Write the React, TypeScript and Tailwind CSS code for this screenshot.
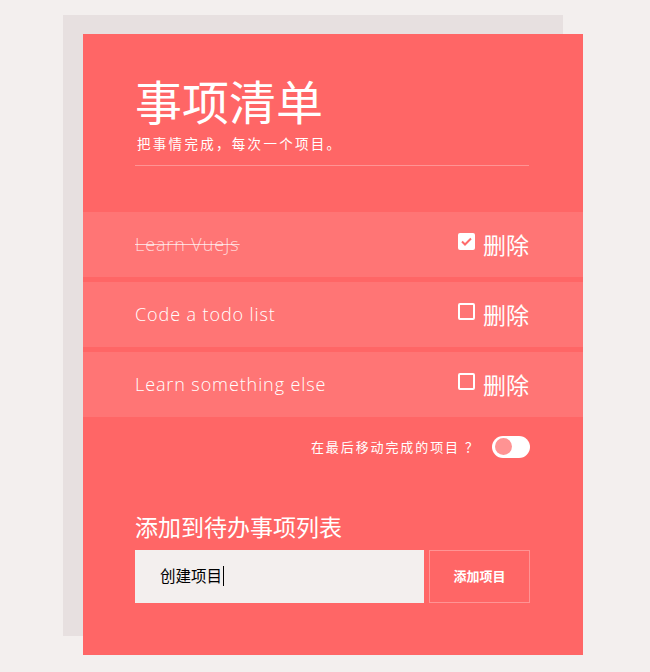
import { useState } from 'react';

interface Todo {
  id: number;
  text: string;
  done: boolean;
}

const LATIN = "font-['Open_Sans','Noto_Sans_CJK_SC',sans-serif]";
const CJK = "font-['Noto_Sans_CJK_SC',sans-serif]";

function CheckBox({ checked }: { checked: boolean }) {
  if (checked) {
    return (
      <span className="w-[17px] h-[17px] mb-[6px] bg-white rounded-[2px] flex items-center justify-center">
        <svg width="11" height="9" viewBox="0 0 11 9">
          <path d="M1 4.5 L4 7.5 L10 1.5" fill="none" stroke="#ff6b6b" strokeWidth="2" />
        </svg>
      </span>
    );
  }
  return <span className="w-[17px] h-[17px] mb-[6px] border-2 border-white rounded-[2px] block" />;
}

export default function App() {
  const [todos] = useState<Todo[]>([
    { id: 1, text: 'Learn VueJs', done: true },
    { id: 2, text: 'Code a todo list', done: false },
    { id: 3, text: 'Learn something else', done: false },
  ]);

  return (
    <div className={`min-h-[672px] bg-[#f3efee] pt-[34px] pl-[83px] ${CJK}`}>
      <div className="w-[500px] h-[621px] bg-[#ff6666] shadow-[-20px_-19px_0_0_#e7e0e0] text-white pt-[40px]">
        {/* Header */}
        <div className="px-[52px]">
          <h1 className="text-[47px] leading-[52px] font-normal">事项清单</h1>
          <p className="mt-[11px] text-[13.5px] leading-none tracking-[2.3px] pl-[2px]">把事情完成，每次一个项目。</p>
          <div className="mt-[14px] h-px bg-white/30 mr-[2px]" />
        </div>

        {/* List */}
        <ul className="mt-[46px] flex flex-col gap-[5px]">
          {todos.map(t => (
            <li key={t.id} className="h-[65px] bg-[#ff7575] flex items-center pl-[52px] pr-[54px]">
              <span className="flex-1">
                <span className={`${LATIN} font-light text-[18px] tracking-[0.9px] ${t.done ? 'line-through text-white/70 px-[8px] -ml-[8px]' : 'text-white'}`}>{t.text}</span>
              </span>
              <CheckBox checked={t.done} />
              <span className="ml-[8px] text-[23px] leading-none">删除</span>
            </li>
          ))}
        </ul>

        {/* Toggle */}
        <div className="mt-[19px] flex items-center justify-end pr-[53px]">
          <span className="text-[13px] tracking-[1.9px]">在最后移动完成的项目</span>
          <span className="ml-[5px] text-[13px]">？</span>
          <span className="ml-[14px] w-[38px] h-[22px] bg-white rounded-full flex items-center pl-[3px]">
            <span className="w-[17px] h-[17px] rounded-full bg-[#ff9393]" />
          </span>
        </div>

        {/* Add */}
        <div className="px-[52px] mt-[57px]">
          <h2 className="text-[23px] leading-none">添加到待办事项列表</h2>
          <div className="mt-[12px] flex gap-[5px]">
            <div className="w-[289px] h-[53px] bg-[#f3efee] flex items-center pl-[25px] text-[15.5px] text-black">
              创建项目<span className="w-px h-[20px] bg-black ml-[1px]" />
            </div>
            <button className="w-[101px] h-[53px] border border-white/30 text-[13px] font-bold">添加项目</button>
          </div>
        </div>
      </div>
    </div>
  );
}
